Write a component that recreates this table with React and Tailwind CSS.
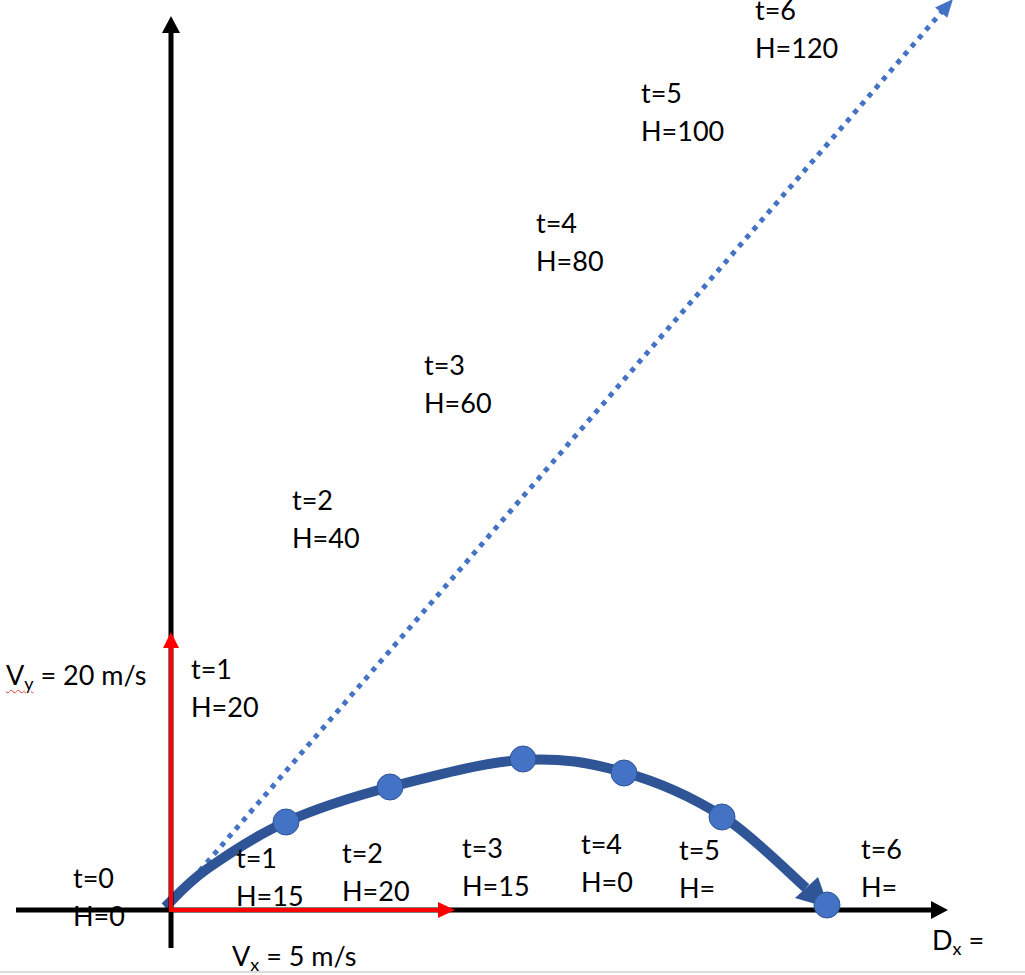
import React from 'react';

// trajectory points (canvas px)
const pathPts = [
    [165, 907], [207, 869], [286, 822], [390, 787], [522, 760], [623, 772], [722, 816], [806, 888],
];
const dots = [[286, 822], [390, 787], [523, 759], [624, 773], [722, 817], [827, 905]];

const smoothPath = (pts) => {
    let d = `M${pts[0][0]},${pts[0][1]}`;
    for (let i = 0; i < pts.length - 1; i++) {
        const p0 = pts[i - 1] || pts[i];
        const p1 = pts[i];
        const p2 = pts[i + 1];
        const p3 = pts[i + 2] || p2;
        const c1 = [p1[0] + (p2[0] - p0[0]) / 6, p1[1] + (p2[1] - p0[1]) / 6];
        const c2 = [p2[0] - (p3[0] - p1[0]) / 6, p2[1] - (p3[1] - p1[1]) / 6];
        d += ` C${c1[0]},${c1[1]} ${c2[0]},${c2[1]} ${p2[0]},${p2[1]}`;
    }
    return d;
};

const labels = [
    { x: 755, y: -9, t: 't=6', h: 'H=120' },
    { x: 641, y: 74, t: 't=5', h: 'H=100' },
    { x: 536, y: 204, t: 't=4', h: 'H=80' },
    { x: 424, y: 346, t: 't=3', h: 'H=60' },
    { x: 292, y: 481, t: 't=2', h: 'H=40' },
    { x: 191, y: 650, t: 't=1', h: 'H=20' },
    { x: 73, y: 859, t: 't=0', h: 'H=0' },
    { x: 236, y: 839, t: 't=1', h: 'H=15' },
    { x: 342, y: 834, t: 't=2', h: 'H=20' },
    { x: 462, y: 829, t: 't=3', h: 'H=15' },
    { x: 581, y: 825, t: 't=4', h: 'H=0' },
    { x: 679, y: 831, t: 't=5', h: 'H=' },
    { x: 861, y: 830, t: 't=6', h: 'H=' },
];

const Label = ({ x, y, children }) => (
    <div className="absolute whitespace-nowrap" style={{ left: x, top: y }}>
        {children}
    </div>
);

const App = () => {
    return (
        <div className="relative w-[1025px] h-[975px] bg-white overflow-hidden font-['Lato',sans-serif] text-[27px] leading-[38px] text-black">
            {/* under layer: dotted line + trajectory */}
            <svg className="absolute inset-0" width="1025" height="975">
                <line x1="178" y1="896" x2="945" y2="8" stroke="#4472c4" strokeWidth="5" strokeDasharray="5 6" />
                <polygon points="953,-1 947.3,17.8 935.1,7.4" fill="#4472c4" />
                <path d={smoothPath(pathPts)} fill="none" stroke="#2f5597" strokeWidth="10" />
                <polygon points="829,908 795,898 818,877" fill="#2f5597" />
            </svg>

            {labels.map((l, i) => (
                <Label key={i} x={l.x} y={l.y}>
                    <div>{l.t}</div>
                    <div>{l.h}</div>
                </Label>
            ))}

            <Label x={6} y={656}>
                <span className="underline decoration-wavy decoration-[#e23b3b] decoration-1 underline-offset-4">V<sub className="text-[18px]">y</sub></span>
                <span> = 20 m/s</span>
            </Label>
            <Label x={232} y={937}>
                V<sub className="text-[18px]">x</sub> = 5 m/s
            </Label>
            <Label x={932} y={921}>
                D<sub className="text-[18px]">x</sub> =
            </Label>

            {/* top layer: axes, red velocity arrows, dots */}
            <svg className="absolute inset-0" width="1025" height="975">
                <line x1="171" y1="32" x2="171" y2="948" stroke="#000" strokeWidth="5" />
                <polygon points="171,16 162,33 180,33" fill="#000" />
                <line x1="16" y1="910" x2="932" y2="910" stroke="#000" strokeWidth="5" />
                <polygon points="948,910 931,901 931,919" fill="#000" />

                <line x1="171" y1="646" x2="171" y2="910" stroke="#ff0000" strokeWidth="4" />
                <polygon points="171,632 163,648 179,648" fill="#ff0000" />
                <line x1="169" y1="910" x2="440" y2="910" stroke="#ff0000" strokeWidth="4" />
                <polygon points="455,910 438,902 438,918" fill="#ff0000" />

                {dots.map(([cx, cy], i) => (
                    <circle key={i} cx={cx} cy={cy} r="13" fill="#4472c4" stroke="#2f5597" strokeWidth="1" />
                ))}
            </svg>

            <div className="absolute left-0 right-0 bottom-[2px] h-[2px] bg-[#dcdcdc]" />
        </div>
    );
};

export default App;
